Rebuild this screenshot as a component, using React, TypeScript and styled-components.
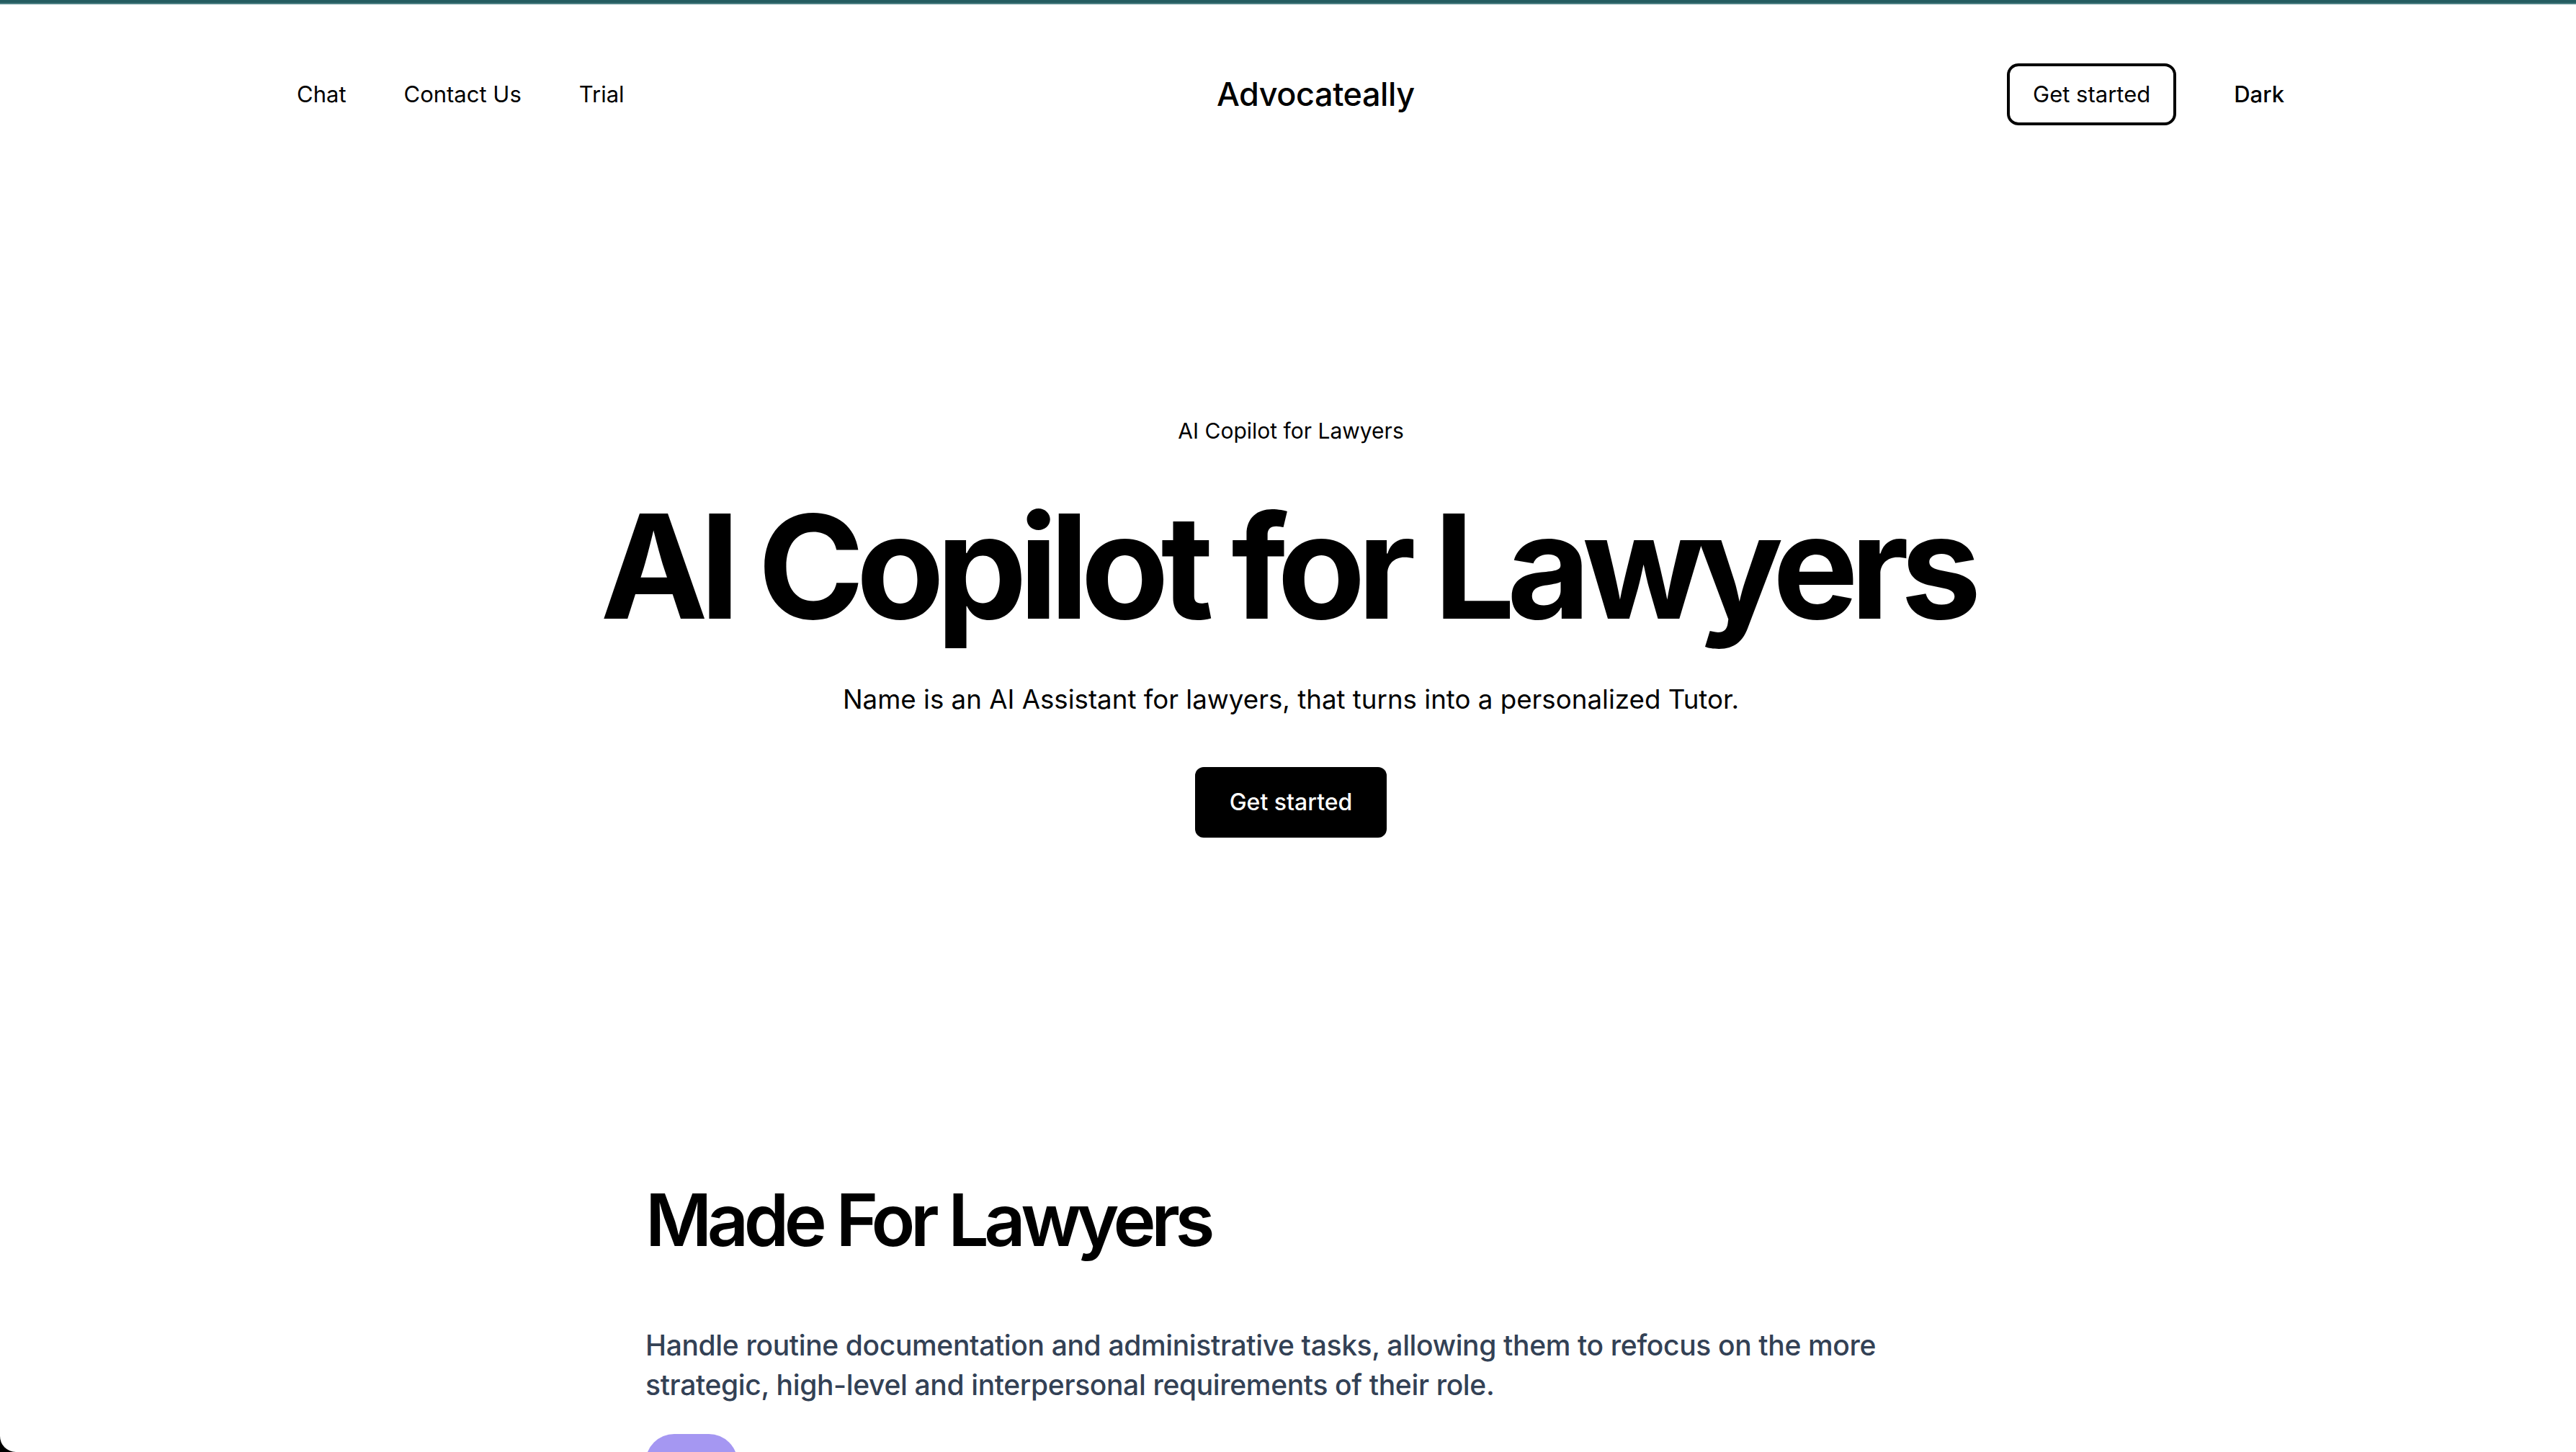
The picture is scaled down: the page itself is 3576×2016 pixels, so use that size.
import React from "react";
import styled, { createGlobalStyle } from "styled-components";

const Global = createGlobalStyle`
  * { box-sizing: border-box; }
  html, body { margin: 0; padding: 0; background: #000; }
  body { font-family: Inter, "Noto Sans", "Liberation Sans", sans-serif; color: #000; }
`;

const Window = styled.div`
  height: 100vh;
  overflow: hidden;
  background: #fff;
  border-bottom-left-radius: 22px;
  display: flex;
  flex-direction: column;
`;

const TopBar = styled.div`
  height: 6px;
  flex: none;
  background: linear-gradient(#245c60 0 4px, #4d8084 4px 6px);
`;

const Nav = styled.header`
  width: 100%;
  max-width: 2800px;
  margin: 0 auto;
  padding: 82px 17px 0 24px;
  display: flex;
  align-items: center;
  justify-content: space-between;
`;

const NavLinks = styled.nav`
  display: flex;
  align-items: center;
  gap: 80px;
`;

const NavLink = styled.a`
  font-size: 31px;
  line-height: 48px;
  color: #000;
  text-decoration: none;
`;

const Logo = styled.div`
  font-size: 45px;
  font-weight: 500;
  line-height: 56px;
  letter-spacing: -0.01em;
`;

const NavActions = styled.div`
  display: flex;
  align-items: center;
  gap: 80px;
`;

const OutlineButton = styled.button`
  font-family: inherit;
  font-size: 31px;
  line-height: 48px;
  padding: 15px 32px;
  border: 4px solid #000;
  border-radius: 16px;
  background: #fff;
  color: #000;
`;

const TextButton = styled.button`
  font-family: inherit;
  font-size: 31px;
  line-height: 48px;
  padding: 0;
  border: 0;
  background: none;
  color: #000;
  font-weight: 500;
`;

const Hero = styled.section`
  display: flex;
  flex-direction: column;
  align-items: center;
  padding: 404px 0 0 8px;
`;

const Eyebrow = styled.p`
  margin: 0;
  font-size: 30px;
  line-height: 40px;
`;

const Title = styled.h1`
  margin: 68px 0 0;
  padding-right: 0.057em;
  font-size: 200px;
  line-height: 1;
  font-weight: 700;
  letter-spacing: -0.057em;
`;

const Lead = styled.p`
  margin: 57px 0 0;
  font-size: 36.7px;
  line-height: 56px;
`;

const SolidButton = styled.button`
  margin-top: 66px;
  font-family: inherit;
  font-size: 32px;
  font-weight: 500;
  line-height: 48px;
  padding: 25px 48px;
  border: 0;
  border-radius: 12px;
  background: #000;
  color: #fff;
`;

const Feature = styled.section`
  width: 1792px;
  margin: 481px auto 0;
  padding-left: 4px;
`;

const FeatureTitle = styled.h2`
  margin: 0;
  font-size: 100px;
  line-height: 1;
  font-weight: 600;
  letter-spacing: -0.064em;
`;

const FeatureText = styled.p`
  margin: 96px 0 0;
  font-size: 39px;
  line-height: 55px;
  font-weight: 500;
  letter-spacing: -0.009em;
  color: #334155;
`;

const Badge = styled.div`
  margin-top: 41px;
  width: 128px;
  height: 128px;
  border-radius: 40px;
  background: #a597f2;
`;

export default function App() {
  return (
    <>
      <Global />
      <Window>
        <TopBar />
        <Nav>
          <NavLinks>
            <NavLink href="#">Chat</NavLink>
            <NavLink href="#">Contact Us</NavLink>
            <NavLink href="#">Trial</NavLink>
          </NavLinks>
          <Logo>Advocateally</Logo>
          <NavActions>
            <OutlineButton>Get started</OutlineButton>
            <TextButton>Dark</TextButton>
          </NavActions>
        </Nav>
        <Hero>
          <Eyebrow>AI Copilot for Lawyers</Eyebrow>
          <Title>AI Copilot for Lawyers</Title>
          <Lead>Name is an AI Assistant for lawyers, that turns into a personalized Tutor.</Lead>
          <SolidButton>Get started</SolidButton>
        </Hero>
        <Feature>
          <FeatureTitle>Made For Lawyers</FeatureTitle>
          <FeatureText>
            Handle routine documentation and administrative tasks, allowing them to refocus on the more
            strategic, high-level and interpersonal requirements of their role.
          </FeatureText>
          <Badge />
        </Feature>
      </Window>
    </>
  );
}
